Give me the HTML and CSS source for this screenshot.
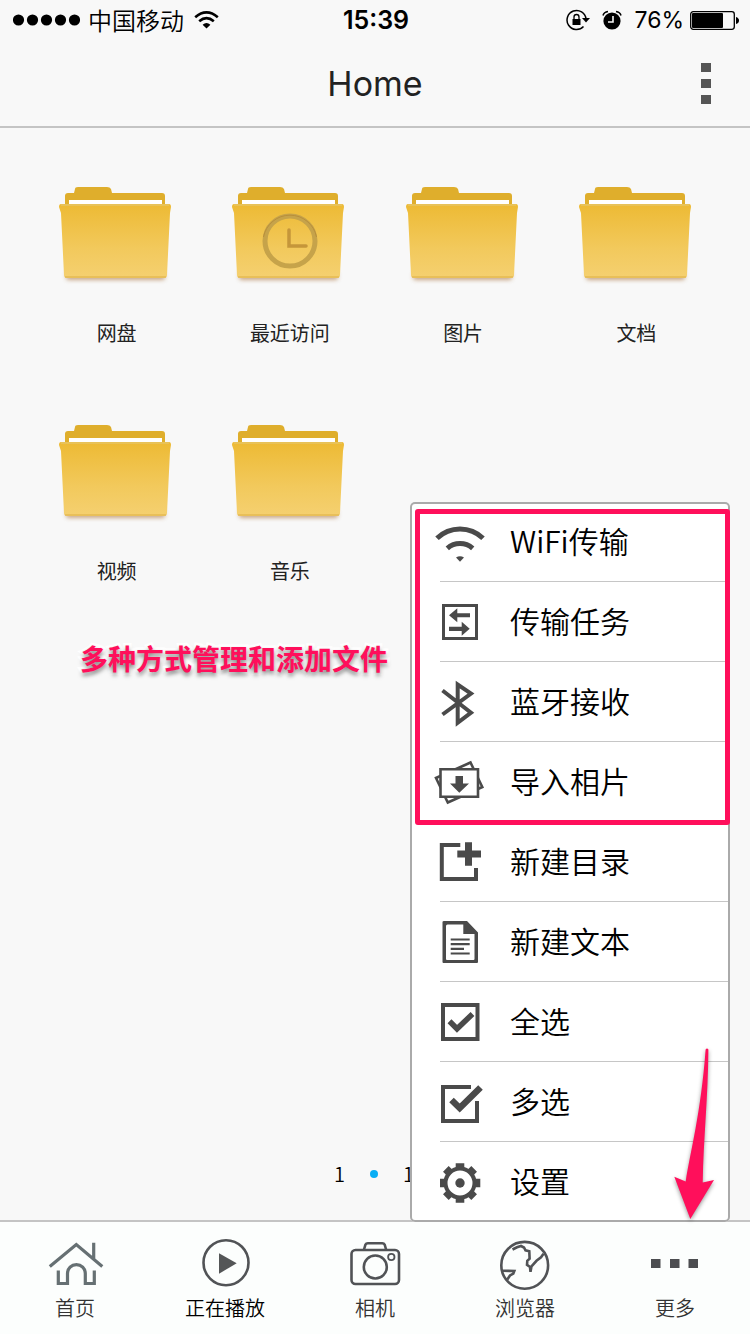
FILE: index.html
```html
<!DOCTYPE html>
<html lang="zh-CN">
<head>
<meta charset="utf-8">
<meta name="viewport" content="width=device-width, initial-scale=1">
<title>Home</title>
<link rel="stylesheet" href="styles.css">
</head>
<body>
<svg class="defs" aria-hidden="true">
  <defs>
    <linearGradient id="front" x1="0" y1="0" x2="0" y2="1">
      <stop offset="0" stop-color="#edba34"/>
      <stop offset=".6" stop-color="#f2c95c"/>
      <stop offset="1" stop-color="#f5d070"/>
    </linearGradient>
    <filter id="soft" x="-20%" y="-100%" width="140%" height="300%"><feGaussianBlur stdDeviation="2"/></filter>
    <symbol id="folder" viewBox="0 0 121 110">
      <rect x="10" y="92" width="99" height="8" rx="3" fill="#a8703a" opacity=".6" filter="url(#soft)"/>
      <path d="M9 28V16q0-3 3-3h6l1-4q0-2 3-2h29q3 0 4 2l1 4h50q3 0 3 3v12z" fill="#dfae2c"/>
      <path d="M13 20h93v5H13z" fill="#fff"/>
      <path d="M5 24h108q2 0 2 3l-1 6-3 62q0 3-3 3H11q-3 0-3-3L5 33l-2-6q0-3 2-3z" fill="url(#front)"/>
      <path d="M5 25h108" stroke="#e8c258" stroke-width="2"/>
      <path d="M9 97h101" stroke="#dcae45" stroke-width="1"/>
    </symbol>
  </defs>
</svg>

<div class="status">
  <div class="status-left">
    <svg width="67" height="12" viewBox="0 0 67 12" aria-hidden="true"><circle cx="5.5" cy="6" r="5.6"/><circle cx="19.5" cy="6" r="5.6"/><circle cx="33.5" cy="6" r="5.6"/><circle cx="47.5" cy="6" r="5.6"/><circle cx="61.5" cy="6" r="5.6"/></svg>
    <span class="carrier">中国移动</span>
    <svg width="25" height="20" viewBox="0 0 25 20" fill="none" stroke="#000" stroke-width="2.6" aria-hidden="true"><path d="M1.200 7.200Q12.500 -2.500 23.800 7.200M5.200 11.200Q12.500 5 19.800 11.200"/><path d="M8.600 14.800Q12.500 11.200 16.400 14.800L12.500 18.600z" fill="#000" stroke="none"/></svg>
  </div>
  <time class="clock">15:39</time>
  <div class="status-right">
    <svg width="24" height="22" viewBox="0 0 24 22" aria-hidden="true"><path d="M17.500 17.500A9.500 9.500 0 1 1 20 10" fill="none" stroke="#000" stroke-width="1.500"/><path d="M16 9h8l-4 4.500z"/><rect x="6.500" y="10" width="8" height="6"/><path d="M8 10.500V8q0-2.500 2.500-2.500T13 8v2.500" fill="none" stroke="#000" stroke-width="1.300"/></svg>
    <svg width="20" height="20" viewBox="0 0 20 20" aria-hidden="true"><circle cx="10" cy="11" r="8.600"/><path d="M1 5.500Q2 2 6 1.500M19 5.500Q18 2 14 1.500" fill="none" stroke="#000" stroke-width="1.600"/><path d="M11 6v6H6" fill="none" stroke="#f8f8f8" stroke-width="1.600"/></svg>
    <span class="percent">76%</span>
    <svg width="49" height="19" viewBox="0 0 49 19" aria-hidden="true"><rect x=".7" y=".7" width="43.600" height="17.600" rx="2.500" fill="none" stroke="#000" stroke-width="1.300"/><rect x="2" y="2" width="31" height="15" rx="1"/><path d="M46 6q3 1 3 3.500T46 13z"/></svg>
  </div>
</div>

<header class="header">
  <h1 class="title">Home</h1>
  <button class="more" type="button" aria-label="更多选项"><svg width="10" height="42" viewBox="0 0 10 42" fill="#555" aria-hidden="true"><path d="M0 1h10v9H0zM0 17h10v9H0zM0 33h10v9H0z"/></svg></button>
</header>

<main class="main">
  <div class="folders">
    <button class="folder" type="button"><svg class="folder-icon" aria-hidden="true"><use href="#folder"/></svg><span>网盘</span></button>
    <button class="folder" type="button"><svg class="folder-icon" aria-hidden="true"><use href="#folder"/><circle cx="61" cy="61" r="25" fill="none" stroke="#c6a34a" stroke-width="5"/><path d="M34.500 57a27 27 0 0 1 53 0" fill="none" stroke="#b98f3a" stroke-width="1"/><path d="M60 50v16h17" fill="none" stroke="#c5963a" stroke-width="3.500" stroke-linecap="round"/></svg><span>最近访问</span></button>
    <button class="folder" type="button"><svg class="folder-icon" aria-hidden="true"><use href="#folder"/></svg><span>图片</span></button>
    <button class="folder" type="button"><svg class="folder-icon" aria-hidden="true"><use href="#folder"/></svg><span>文档</span></button>
    <button class="folder" type="button"><svg class="folder-icon" aria-hidden="true"><use href="#folder"/></svg><span>视频</span></button>
    <button class="folder" type="button"><svg class="folder-icon" aria-hidden="true"><use href="#folder"/></svg><span>音乐</span></button>
  </div>
  <p class="caption">多种方式管理和添加文件</p>
  <div class="pager"><span>1</span><i class="pager-dot"></i><span>1</span></div>

  <div class="menu">
    <ul class="menu-list">
      <li class="menu-row"><button class="menu-item" type="button"><svg class="menu-icon" viewBox="0 0 60 80" aria-hidden="true"><g fill="none" stroke="#4a4a4a" stroke-width="5"><path d="M7 36.300A33 33 0 0 1 53 36.300"/><path d="M17.300 46.300A19.200 19.200 0 0 1 42.700 46.300"/></g><path d="M26 55.500q4-2.500 8 0l-4 4.200z"/></svg><span class="menu-label">WiFi传输</span></button></li>
      <li class="menu-row"><button class="menu-item" type="button"><svg class="menu-icon" viewBox="0 0 60 80" aria-hidden="true"><path d="M13.500 23.500h33v33h-33z" fill="none" stroke="#4a4a4a" stroke-width="3"/><path d="M19 33.300l8.300-7v5H40v4H27.300v5zM39.700 46.700l-8-7v5H19V49h12.700v4.700z"/></svg><span class="menu-label">传输任务</span></button></li>
      <li class="menu-row"><button class="menu-item" type="button"><svg class="menu-icon" viewBox="0 0 60 80" aria-hidden="true"><path d="M12.500 28.500L41 50.700 27.700 60.800V22.500L41 31.500 12.500 52.500" fill="none" stroke="#4a4a4a" stroke-width="4"/></svg><span class="menu-label">蓝牙接收</span></button></li>
      <li class="menu-row"><button class="menu-item" type="button"><svg class="menu-icon" viewBox="0 0 60 80" aria-hidden="true"><g stroke="#4a4a4a" stroke-width="2.600" fill="#fff"><path d="M40.500 20.500L6 36 17.800 60.500 52.300 45z"/><path d="M10.500 27.300h37.500v27.500H10.500z"/></g><path d="M25.500 34H33v7.500h6L29.300 50.700 20 41.500h5.500z"/></svg><span class="menu-label">导入相片</span></button></li>
      <li class="menu-row"><button class="menu-item" type="button"><svg class="menu-icon" viewBox="0 0 60 80" aria-hidden="true"><path d="M30.300 23H11.800V57H46V46" fill="none" stroke="#4a4a4a" stroke-width="4"/><path d="M35 20.300h7v8.200h9v7h-9v8.200h-7v-8.200h-7.700v-7H35z"/></svg><span class="menu-label">新建目录</span></button></li>
      <li class="menu-row"><button class="menu-item" type="button"><svg class="menu-icon" viewBox="0 0 60 80" aria-hidden="true"><path d="M14 19h23l11 11.500V60q0 1-1 1H13.500q-1 0-1-1V20q0-1 1.500-1zm2 5v33q0 1 1 1h26.500q1 0 1-1V32H33.300V22.500H17.500q-1.500 0-1.500 1.500z" fill-rule="evenodd"/><path d="M20.700 37.500h19M20.700 42.200h19M20.700 46.900h13.300M20.700 51.500h19" stroke="#4a4a4a" stroke-width="2.200"/></svg><span class="menu-label">新建文本</span></button></li>
      <li class="menu-row"><button class="menu-item" type="button"><svg class="menu-icon" viewBox="0 0 60 80" aria-hidden="true"><g fill="none" stroke="#4a4a4a"><path d="M13 23h34.500v34H13z" stroke-width="4"/><path d="M19.500 39.300l7.500 7.500L42.500 32" stroke-width="5.500"/></g></svg><span class="menu-label">全选</span></button></li>
      <li class="menu-row"><button class="menu-item" type="button"><svg class="menu-icon" viewBox="0 0 60 80" aria-hidden="true"><g fill="none" stroke="#4a4a4a"><path d="M41 25H13V59H47V39" stroke-width="4"/><path d="M21.500 38l8.200 8L50.500 25.500" stroke-width="6.500"/></g></svg><span class="menu-label">多选</span></button></li>
      <li class="menu-row"><button class="menu-item" type="button"><svg class="menu-icon" viewBox="0 0 60 80" aria-hidden="true"><circle cx="30" cy="41" r="14.500" fill="none" stroke="#4a4a4a" stroke-width="4"/><circle cx="30" cy="41" r="4.700"/><path d="M25.700 21.200h8.600V27h-8.600zM25.700 55h8.600v5.800h-8.600zM10 36.700h6v8.600h-6zM44 36.700h6.300v8.600H44z"/><path d="M26 21h8v6h-8zM26 55h8v6h-8zM10 37h6v8h-6zM44 37h6v8h-6z" transform="rotate(45 30 41)"/></svg><span class="menu-label">设置</span></button></li>
    </ul>
    <div class="highlight"></div>
    <svg class="arrow" viewBox="0 0 50 184" aria-hidden="true"><path d="M36.600 11.500Q38 9.500 39.400 11.500C39 60 34.500 100 33.700 144.500L45 142 21.300 181 5.300 138.700 16.700 143.500C21 115 32 75 36.600 11.500z" fill="#ff0f5b"/></svg>
  </div>
</main>

<nav class="tabs">
  <a class="tab" href="#home"><svg class="tab-icon" viewBox="0 0 60 54" aria-hidden="true"><path d="M4.800 30.500L31.300 8.500 57.300 30.500M48.700 6.700V23M13.300 34.500V47.500h9.200V37.500a8.900 8.900 0 0 1 17.800 0V47.500h9V34.500" stroke="#667073" stroke-width="3.200"/></svg>首页</a>
  <a class="tab tab-current" href="#playing"><svg class="tab-icon" viewBox="0 0 60 54" aria-hidden="true"><circle cx="31" cy="26.700" r="22.500"/><path d="M24 17.300L41.700 27.300 24 37.700z" fill="#545657" stroke="none"/></svg>正在播放</a>
  <a class="tab" href="#camera"><svg class="tab-icon" viewBox="0 0 60 54" aria-hidden="true"><rect x="6.500" y="14" width="47.500" height="34" rx="4"/><path d="M19 13.500l1.500-5q.6-1.300 2.300-1.300h14.500q1.700 0 2.300 1.300l1.500 5"/><circle cx="30.300" cy="31" r="11.500"/><circle cx="46.300" cy="21" r="3.200" stroke-width="1.800"/></svg>相机</a>
  <a class="tab" href="#browser"><svg class="tab-icon" viewBox="0 0 60 54" aria-hidden="true"><circle cx="29.700" cy="29.300" r="23.400"/><path d="M17.500 13.500L22 11.300l4-1.300 3 1.500 1.500 2.800 3.800 1 .3 7.500-2.300 2-.3 4 3 2.200.5 4.800 1-5.500 5-5.500 4.500-3.500 2.500-3.500M8 34.800l11.300.2-1 2.500-3.300 2-2.700 4"/></svg>浏览器</a>
  <a class="tab" href="#more"><svg class="tab-icon" viewBox="0 0 60 54" aria-hidden="true"><path d="M6 23h9.500v9H6zM25 23h9.500v9H25zM43.500 23H53v9h-9.500z" fill="#4c4d50" stroke="none"/></svg>更多</a>
</nav>
</body>
</html>
```
FILE: styles.css
```css
* {
  box-sizing: border-box;
}

body {
  margin: 0;
  min-height: 100vh;
  display: flex;
  flex-direction: column;
  background: #f8f8f8;
  color: #000;
  font-family: "Noto Sans CJK SC", "Noto Sans", sans-serif;
}

button {
  border: 0;
  padding: 0;
  background: none;
  font: inherit;
  color: inherit;
  cursor: pointer;
}

.defs {
  position: absolute;
  width: 0;
  height: 0;
}

.status {
  display: grid;
  grid-template-columns: 1fr auto 1fr;
  align-items: center;
  height: 40px;
  padding: 0 11px 0 13px;
}

.status-left,
.status-right {
  display: flex;
  align-items: center;
}

.status-left {
  gap: 8px;
}

.carrier {
  margin-right: 2px;
  font-size: 24px;
  font-weight: 350;
  line-height: 40px;
}

.status-right {
  justify-content: flex-end;
  gap: 12px;
}

.clock,
.percent {
  font-family: Inter, "Liberation Sans", sans-serif;
}

.clock {
  font-size: 25px;
  font-weight: 600;
}

.percent {
  font-size: 23px;
}

.percent + svg {
  margin-left: -6px;
}

.header {
  display: grid;
  grid-template-columns: 1fr auto 1fr;
  align-items: center;
  height: 88px;
  border-bottom: 2px solid #c4c4c4;
}

.title {
  grid-column: 2;
  margin: 0;
  font-family: Inter, "Liberation Sans", sans-serif;
  font-size: 34px;
  font-weight: 400;
  color: #222;
}

.more {
  justify-self: end;
  padding: 10px 39px;
}

.more svg {
  display: block;
}

.main {
  position: relative;
  z-index: 1;
  flex: 1;
  display: flex;
  flex-direction: column;
}

.folders {
  display: grid;
  grid-template-columns: repeat(4, 1fr);
  row-gap: 71px;
  padding: 52px 27px 0 30px;
}

.folder {
  display: flex;
  flex-direction: column;
  align-items: center;
  gap: 29px;
  font-size: 20px;
  line-height: 28px;
  color: #222;
}

.folder-icon {
  width: 121px;
  height: 110px;
}

.caption {
  margin: 53px 0 0 80px;
  font-size: 28px;
  line-height: 40px;
  font-weight: 700;
  color: #ff0f5b;
  -webkit-text-stroke: 5px #fff;
  paint-order: stroke fill;
  text-shadow: 0 3px 4px rgba(0, 0, 0, 0.5);
}

.pager {
  display: flex;
  justify-content: center;
  align-items: center;
  gap: 25px;
  margin-top: auto;
  padding: 0 2px 32px 0;
  font-size: 20px;
  font-weight: 350;
  line-height: 28px;
}

.pager-dot {
  width: 8px;
  height: 8px;
  border-radius: 50%;
  background: #09aef5;
}

.menu {
  position: absolute;
  right: 20px;
  bottom: -2px;
  width: 320px;
  padding: 0 2px;
  border-radius: 5px;
  background: #fff;
  box-shadow: inset 0 0 0 2px #aaa;
}

.menu-list {
  margin: 0;
  padding: 0;
  list-style: none;
}

.menu-row {
  background: linear-gradient(#c6c6c6, #c6c6c6) 28px bottom / 100% 1px no-repeat;
}

.menu-row:last-child {
  background: none;
}

.menu-item {
  display: flex;
  align-items: center;
  gap: 20px;
  width: 100%;
  height: 80px;
  padding-left: 18px;
  font-size: 30px;
  font-weight: 350;
  text-align: left;
}

.menu-label {
  padding-bottom: 4px;
}

.menu-icon {
  width: 60px;
  height: 80px;
  fill: #4a4a4a;
}

.highlight {
  position: absolute;
  top: 7px;
  left: 5px;
  right: 0;
  height: 316px;
  border: 5px solid #ff0f5b;
  border-radius: 3px;
  pointer-events: none;
}

.arrow {
  position: absolute;
  right: 11px;
  bottom: 0;
  width: 50px;
  height: 184px;
  filter: drop-shadow(0 2px 2px rgba(0, 0, 0, 0.4));
  pointer-events: none;
}

.tabs {
  display: grid;
  grid-template-columns: repeat(5, 1fr);
  border-top: 2px solid #c4c4c4;
  background: #fcfefd;
}

.tab {
  display: flex;
  flex-direction: column;
  align-items: center;
  gap: 4px;
  padding: 14px 0 12px;
  font-size: 20px;
  font-weight: 350;
  line-height: 28px;
  color: #333;
  text-decoration: none;
}

.tab-current {
  color: #000;
}

.tab-icon {
  width: 60px;
  height: 54px;
  fill: none;
  stroke: #515356;
  stroke-width: 2.6px;
}
```
